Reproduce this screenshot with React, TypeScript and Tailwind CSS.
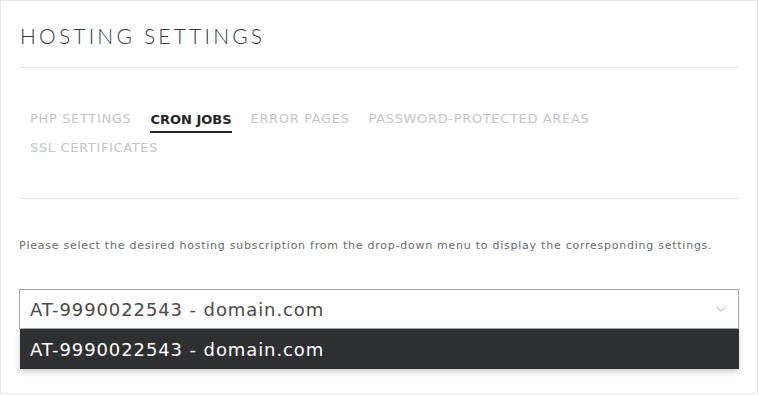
import { ChevronDown } from 'lucide-react';

export default function App() {
  const tabs = [
    { label: 'PHP SETTINGS', active: false },
    { label: 'CRON JOBS', active: true },
    { label: 'ERROR PAGES', active: false },
    { label: 'PASSWORD-PROTECTED AREAS', active: false },
    { label: 'SSL CERTIFICATES', active: false },
  ];
  const option = 'AT-9990022543 - domain.com';

  return (
    <div className="w-[759px] h-[395px] bg-white" style={{ fontFamily: '"DejaVu Sans", sans-serif' }}>
      <div className="h-[394px] w-[758px] border border-[#e8e8e8] px-[18px]">
        {/* Title */}
        <div className="h-[67px] border-b border-[#e4e4e4] pt-[22px] pl-px">
          <h1 className="font-['Lato',sans-serif] text-[21px] font-light tracking-[3.2px] text-[#3a3a3a] leading-[26px]">
            HOSTING SETTINGS
          </h1>
        </div>

        {/* Tabs */}
        <div className="h-[131px] border-b border-[#e4e4e4] pt-[38px] pl-[11px]">
          <div className="flex flex-wrap gap-x-[19px] pr-[120px]">
            {tabs.map((t) => (
              <div
                key={t.label}
                className={
                  'h-[29px] text-[13px] leading-[26px] ' +
                  (t.active ? 'font-bold tracking-[0px] text-[#252525]' : 'tracking-[0.65px] text-[#c4c6cc]')
                }
              >
                <span className={t.active ? 'inline-block border-b-2 border-[#252525] leading-[22px] pt-[3px]' : ''}>
                  {t.label}
                </span>
              </div>
            ))}
          </div>
        </div>

        {/* Body */}
        <p className="pt-[39px] text-[11px] leading-[16px] tracking-[0.75px] text-[#6b6b6b]">
          Please select the desired hosting subscription from the drop-down menu to display the corresponding settings.
        </p>

        <div className="relative mt-[35px] w-[720px]">
          <div className="flex h-[40px] items-center justify-between border border-[#a9a9a9] pl-[10px] pr-[8px]">
            <span className="text-[18px] tracking-[0.9px] text-[#4a4a4a]">{option}</span>
            <ChevronDown className="h-[18px] w-[18px] text-[#a0a0a0]" strokeWidth={1.2} />
          </div>
          <div className="ml-px flex h-[40px] items-center bg-[#2e2f31] pl-[10px] shadow-[0_3px_6px_rgba(0,0,0,0.2)]">
            <span className="text-[18px] tracking-[0.9px] text-white">{option}</span>
          </div>
        </div>
      </div>
    </div>
  );
}
